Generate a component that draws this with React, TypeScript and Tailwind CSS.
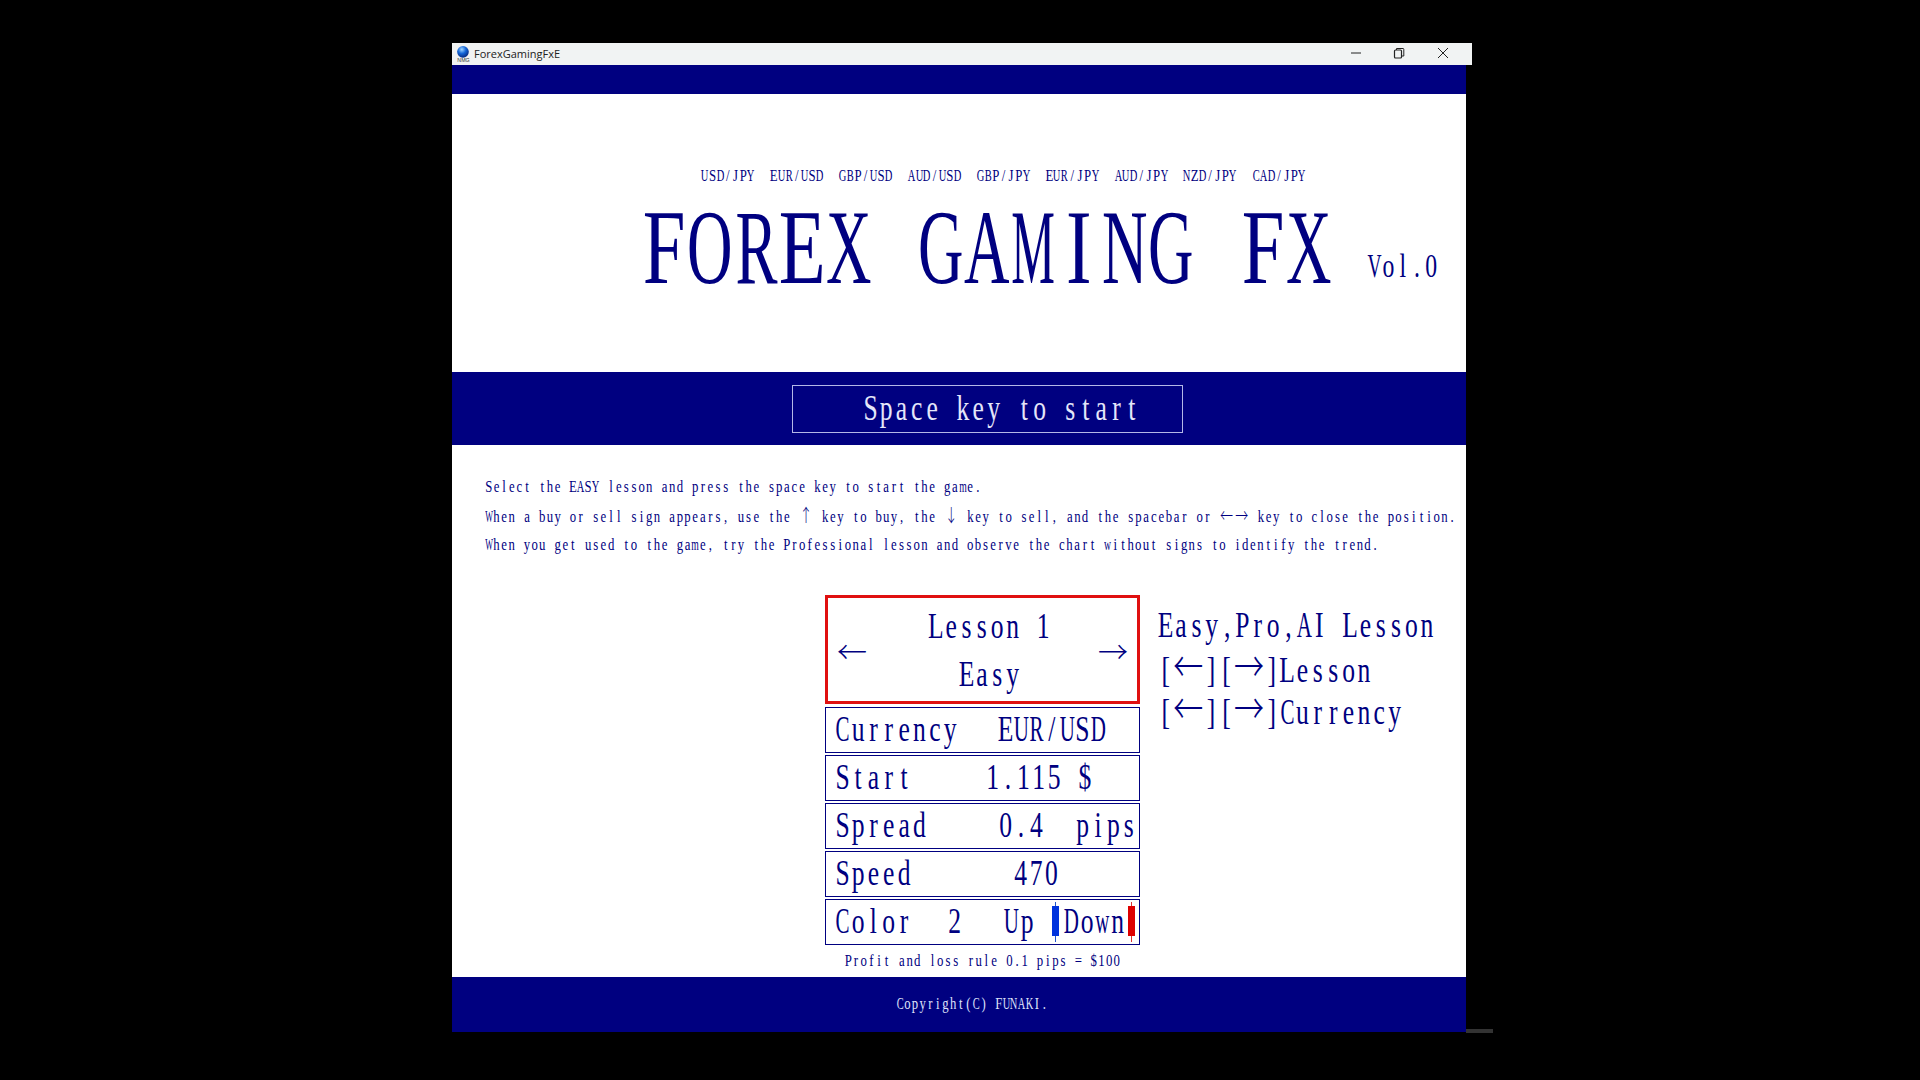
import { Children } from "react";
import type { ReactNode } from "react";

const pairs = ["USD/JPY", "EUR/USD", "GBP/USD", "AUD/USD", "GBP/JPY", "EUR/JPY", "AUD/JPY", "NZD/JPY", "CAD/JPY"];

// the original font is a half-width mincho: every letter sits in a fixed cell and wide ones get squeezed
function squeeze(c: string) {
  if (c === "M" || c === "W") return "scale-x-[0.64]";
  if (c === "m" || c === "w") return "scale-x-[0.76]";
  if (/[ABCDGHKNOQRUVXY]/.test(c)) return "scale-x-[0.82]";
  return "";
}

function Cells({ text }: { text: string }) {
  return (
    <>
      {text.split("").map((c, i) => (
        <span key={i} className="inline-flex justify-center w-[0.6em]">
          <span className={`inline-block shrink-0 ${squeeze(c)}`}>{c}</span>
        </span>
      ))}
    </>
  );
}

function Tall({ className = "", children }: { className?: string; children: ReactNode }) {
  return (
    <span className={`inline-block whitespace-pre leading-none scale-y-[1.38] font-['Liberation_Serif',serif] ${className}`}>
      {Children.map(children, (c) => (typeof c === "string" ? <Cells text={c} /> : c))}
    </span>
  );
}

function BigArrow({ children }: { children: string }) {
  return <span className="font-['Noto_Sans_CJK_JP',sans-serif] font-light text-[30px] leading-none">{children}</span>;
}

function SmallArrow({ children }: { children: string }) {
  return <span className="inline-block w-[15.4px] text-center font-['Noto_Sans_CJK_JP',sans-serif] font-light text-[13px] leading-none">{children}</span>;
}

function Row({ children }: { children: ReactNode }) {
  return <div className="h-[46px] flex items-center pl-[9px] border border-[#000080] text-[25.6px] leading-none">{children}</div>;
}

function Candle({ body, wick }: { body: string; wick: string }) {
  return (
    <svg width="9" height="40" viewBox="0 0 9 40" className="shrink-0">
      <line x1="4.5" y1="0" x2="4.5" y2="40" stroke={wick} strokeWidth="1" />
      <rect x="1" y="4" width="7" height="30" fill={body} />
    </svg>
  );
}

function AppIcon() {
  return (
    <svg width="15" height="17" viewBox="0 0 14 16">
      <defs>
        <radialGradient id="ball" cx="0.4" cy="0.3" r="0.7">
          <stop offset="0" stopColor="#9fd4ff" />
          <stop offset="0.5" stopColor="#1466d8" />
          <stop offset="1" stopColor="#082a80" />
        </radialGradient>
      </defs>
      <circle cx="6.5" cy="5.5" r="5.5" fill="url(#ball)" />
      <text x="7" y="15.5" fontSize="5" textAnchor="middle" fill="#333" fontFamily="Liberation Sans, sans-serif">NMG</text>
    </svg>
  );
}

function TitleBar() {
  return (
    <div className="w-[1020px] h-[22px] bg-[#f1f3f3] flex items-center pl-[4px] text-[#222]">
      <AppIcon />
      <span className="ml-[3px] font-['Open_Sans',sans-serif] text-[11px]">ForexGamingFxE</span>
      <div className="ml-auto flex items-center pb-[2px] text-[#222]">
        <svg width="12" height="12" viewBox="0 0 12 12" className="mr-[31px]">
          <line x1="1" y1="6" x2="11" y2="6" stroke="currentColor" strokeWidth="1" />
        </svg>
        <svg width="12" height="12" viewBox="0 0 12 12" className="mr-[32px]">
          <rect x="1.5" y="3" width="7" height="8" rx="1" fill="none" stroke="currentColor" strokeWidth="1.2" />
          <path d="M3.5 3V1.5h6.5a.8.8 0 0 1 .8.8V9H8.5" fill="none" stroke="currentColor" strokeWidth="1" />
        </svg>
        <svg width="12" height="12" viewBox="0 0 12 12" className="mr-[23px]">
          <path d="M1 1l10 10M11 1L1 11" fill="none" stroke="currentColor" strokeWidth="1" />
        </svg>
      </div>
    </div>
  );
}

export default function App() {
  return (
    <div className="w-full h-screen bg-black pt-[43px] pl-[452px] overflow-hidden text-[#000080]">
      <TitleBar />
      <div className="flex items-end">
        <div className="w-[1014px] bg-white">
          <div className="h-[29px] bg-[#000080]" />

          <div className="h-[278px]">
            <div className="pt-[76px] pl-[249px] flex gap-[15.2px] text-[12.8px] leading-[18px]">
              {pairs.map((p, i) => (
                <Tall key={i}>{p}</Tall>
              ))}
            </div>
            <div className="mt-[28px] pl-[189px] flex items-baseline">
              <Tall className="text-[76.8px]">FOREX GAMING FX</Tall>
              <Tall className="ml-[35px] text-[23.7px]">Vol.0</Tall>
            </div>
          </div>

          <div className="h-[73px] bg-[#000080] flex items-center pl-[340px]">
            <div className="w-[391px] h-[48px] border border-[#b4b8e8] flex items-center pl-[70px] text-[25.6px] text-[#e4e6fa]">
              <Tall>Space key to start</Tall>
            </div>
          </div>

          <div className="pt-[27px] pl-[33px] text-[12.75px] leading-[29px] h-[150px]">
            <div><Tall>Select the EASY lesson and press the space key to start the game.</Tall></div>
            <div>
              <Tall>
                {"When a buy or sell sign appears, use the "}<SmallArrow>↑</SmallArrow>{" key to buy, the "}<SmallArrow>↓</SmallArrow>{" key to sell, and the spacebar or "}<SmallArrow>←</SmallArrow><SmallArrow>→</SmallArrow>{" key to close the position."}
              </Tall>
            </div>
            <div><Tall>When you get used to the game, try the Professional lesson and observe the chart without signs to identify the trend.</Tall></div>
          </div>

          <div className="flex pl-[373px]">
            <div className="w-[315px]">
              <div className="h-[109px] border-[3px] border-[#e01010] flex items-center px-[9px] text-[25.6px]">
                <BigArrow>←</BigArrow>
                <div className="flex-1 pl-[14px] text-center leading-[48px]">
                  <div><Tall>Lesson 1</Tall></div>
                  <div><Tall>Easy</Tall></div>
                </div>
                <BigArrow>→</BigArrow>
              </div>
              <div className="mt-[3px] flex flex-col gap-[2px]">
                <Row>
                  <Tall className="w-[163px]">Currency</Tall>
                  <Tall>EUR/USD</Tall>
                </Row>
                <Row>
                  <Tall className="w-[150px]">Start</Tall>
                  <Tall>1.115 $</Tall>
                </Row>
                <Row>
                  <Tall className="w-[163px]">Spread</Tall>
                  <Tall className="w-[77px]">0.4</Tall>
                  <Tall>pips</Tall>
                </Row>
                <Row>
                  <Tall className="w-[178px]">Speed</Tall>
                  <Tall>470</Tall>
                </Row>
                <Row>
                  <Tall className="w-[112px]">Color</Tall>
                  <Tall className="w-[57px]">2</Tall>
                  <Tall className="w-[47px]">Up</Tall>
                  <Candle body="#0033dd" wick="#2255cc" />
                  <Tall className="ml-[4px] w-[63px]">Down</Tall>
                  <Candle body="#dd0000" wick="#dd3333" />
                </Row>
              </div>
              <div className="h-[32px] flex items-center justify-center text-[12.8px]">
                <Tall>Profit and loss rule 0.1 pips = $100</Tall>
              </div>
            </div>
            <div className="ml-[18px] text-[25.6px] leading-[48px]">
              <div className="mt-[6px]"><Tall>Easy,Pro,AI Lesson</Tall></div>
              <div className="mt-[1px] flex items-center">
                <Tall>[<BigArrow>←</BigArrow>][<BigArrow>→</BigArrow>]Lesson</Tall>
              </div>
              <div className="mt-[9px] flex items-center">
                <Tall>[<BigArrow>←</BigArrow>][<BigArrow>→</BigArrow>]Currency</Tall>
              </div>
            </div>
          </div>

          <div className="h-[55px] bg-[#000080] flex items-center pl-[444px] text-[12.7px] text-[#dfe2fa]">
            <Tall>Copyright(C) FUNAKI.</Tall>
          </div>
        </div>
        <div className="w-[27px] h-[4px] mb-[-1px] bg-[#333333]" />
      </div>
    </div>
  );
}
